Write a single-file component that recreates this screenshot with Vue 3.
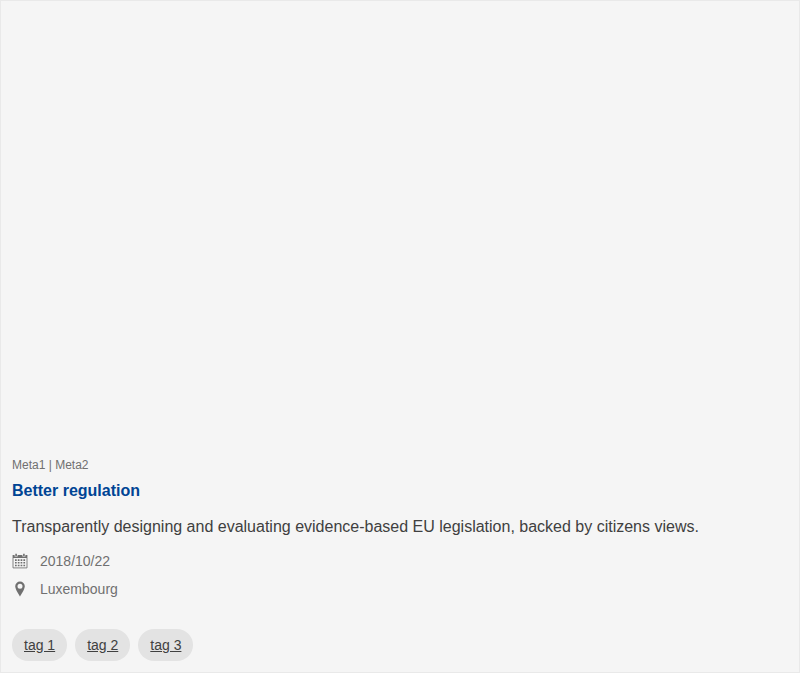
<script setup>
const tags = ['tag 1', 'tag 2', 'tag 3']
</script>

<template>
  <article class="card">
    <div class="image"></div>
    <div class="body">
      <div class="meta">Meta1 | Meta2</div>
      <h1 class="title">Better regulation</h1>
      <p class="description">Transparently designing and evaluating evidence-based EU legislation, backed by citizens views.</p>
      <ul class="infos">
        <li class="info">
          <svg class="icon" viewBox="0 0 16 16" fill="currentColor">
            <path d="M.6 2h2v1.4h3V2h4.8v1.4h3V2h2v3H.6z" />
            <path d="M3.3.8h1.6v2.1H3.3zM11.1.8h1.6v2.1h-1.6z" />
            <path d="M1 5v9.9h14V5" fill="none" stroke="currentColor" stroke-width=".85" />
            <path d="M3 6.3h1.7v1.6H3zM5.8 6.3h1.7v1.6H5.8zM8.6 6.3h1.7v1.6H8.6zM11.4 6.3h1.7v1.6h-1.7zM3 9h1.7v1.6H3zM5.8 9h1.7v1.6H5.8zM8.6 9h1.7v1.6H8.6zM11.4 9h1.7v1.6h-1.7zM3 11.7h1.7v1.6H3zM5.8 11.7h1.7v1.6H5.8zM8.6 11.7h1.7v1.6H8.6zM11.4 11.7h1.7v1.6h-1.7z" />
          </svg>
          <span>2018/10/22</span>
        </li>
        <li class="info">
          <svg class="icon" viewBox="0 0 16 16" fill="currentColor">
            <path fill-rule="evenodd" d="M8 .5a4.8 4.8 0 0 0-4.8 4.8C3.2 8.5 8 15.5 8 15.5s4.8-7 4.8-10.2A4.8 4.8 0 0 0 8 .5zm0 2.3a2.5 2.5 0 1 1 0 5 2.5 2.5 0 0 1 0-5z" />
          </svg>
          <span>Luxembourg</span>
        </li>
      </ul>
      <div class="tags">
        <a v-for="tag in tags" :key="tag" class="tag" href="#">{{ tag }}</a>
      </div>
    </div>
  </article>
</template>

<style>
body { margin: 0; background: #f5f5f5; }
</style>

<style scoped>
.card {
  box-sizing: border-box;
  height: 673px;
  border: 1px solid #e9e9e9;
  background: #f5f5f5;
  color: #404040;
  font-family: "Liberation Sans", Arial, sans-serif;
}
.image { height: 445px; }
.body { padding: 11px; }
.meta { font-size: 12px; line-height: 16px; color: #707070; }
.title { margin: 8px 0 0; font-size: 16px; line-height: 20px; color: #004494; }
.description { margin: 14px 0 0; font-size: 16px; line-height: 24px; }
.infos { list-style: none; margin: 12px 0 0; padding: 0; color: #707070; font-size: 14px; line-height: 20px; }
.info { display: flex; align-items: center; gap: 12px; }
.info + .info { margin-top: 8px; }
.icon { width: 16px; height: 16px; }
.tags { display: flex; gap: 8px; margin-top: 30px; }
.tag {
  padding: 0 12px;
  border-radius: 16px;
  background: #e3e3e3;
  color: #404040;
  font-size: 14px;
  line-height: 32px;
}
</style>
